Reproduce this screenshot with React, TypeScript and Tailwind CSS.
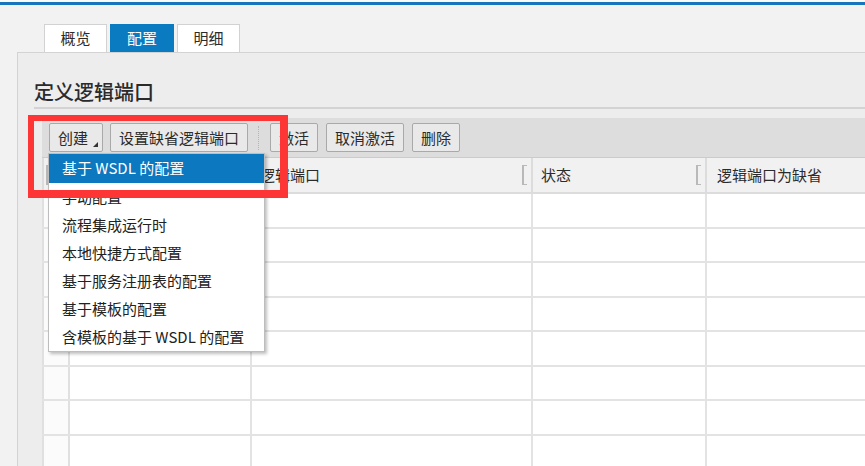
import React from "react";

const font = { fontFamily: '"Noto Sans CJK SC", "Noto Sans", sans-serif' };

function Btn({ children, caret }: { children: React.ReactNode; caret?: boolean }) {
  return (
    <div className="relative h-[29px] px-[8px] flex items-center rounded-[2px] border border-[#a9a9a9] bg-[#e9e9e9] text-[15px] text-[#2b2b2b] leading-none">
      {children}
      {caret && (
        <div className="absolute right-[4px] bottom-[4px] w-0 h-0 border-l-[5px] border-l-transparent border-b-[5px] border-b-[#333]" />
      )}
    </div>
  );
}

function Handle() {
  return <div className="w-[5px] h-[20px] border-l-2 border-t border-b border-[#b9b9b9]" />;
}

export default function App() {
  const rows = Array.from({ length: 8 });
  const menu = [
    "手动配置",
    "流程集成运行时",
    "本地快捷方式配置",
    "基于服务注册表的配置",
    "基于模板的配置",
    "含模板的基于 WSDL 的配置",
  ];
  return (
    <div className="relative w-[865px] h-[466px] overflow-hidden bg-[#f2f2f2] text-[#2b2b2b]" style={font}>
      <div className="h-[2px] bg-[#fafafa]" />
      <div className="h-[3px] bg-[#1775bd]" />
      {/* tabs */}
      <div className="mt-[19px] ml-[44px] flex gap-[3px] h-[28px]">
        <div className="w-[63px] flex items-center justify-center bg-white border border-[#d2d2d2] border-b-0 text-[15px]">概览</div>
        <div className="w-[64px] flex items-center justify-center bg-[#0b7bc1] text-white text-[15px]">配置</div>
        <div className="w-[63px] flex items-center justify-center bg-white border border-[#d2d2d2] border-b-0 text-[15px]">明细</div>
      </div>
      {/* panel */}
      <div className="ml-[17px] h-[414px] bg-[#ededed] border-l border-t border-[#d3d3d3] pl-[16px]">
        <div className="mt-[27px] h-[24px] leading-[24px] text-[20px] font-medium text-[#2a2a2a]">定义逻辑端口</div>
        <div className="mt-[3px] h-[2px] bg-[#d3d3d3]" />
        <div className="ml-[8px] mt-[9px]">
          {/* toolbar */}
          <div className="h-[40px] bg-[#dddddd] border-b border-[#cbcbcb] flex items-center pl-[7px]">
            <Btn caret>
              <span className="pr-[6px]">创建</span>
            </Btn>
            <div className="ml-[7px]">
              <Btn>设置缺省逻辑端口</Btn>
            </div>
            <div className="ml-[10px] mr-[11px] h-[24px] border-l border-dotted border-[#b5b5b5]" />
            <Btn>激活</Btn>
            <div className="ml-[8px]">
              <Btn>取消激活</Btn>
            </div>
            <div className="ml-[8px]">
              <Btn>删除</Btn>
            </div>
          </div>
          {/* grid header */}
          <div className="flex h-[36px] bg-[#f1f1f1] border-b-2 border-[#dcdcdc] text-[15px]">
            <div className="w-[26px] flex items-center pl-[2px] border-l-2 border-[#dcdcdc]">
              <Handle />
            </div>
            <div className="w-[182px]" />
            <div className="w-[281px] flex items-center justify-between pl-[8px] pr-[4px] border-l-2 border-[#dcdcdc]">
              <span>逻辑端口</span>
              <Handle />
            </div>
            <div className="w-[174px] flex items-center justify-between pl-[8px] pr-[4px] border-l-2 border-[#dcdcdc]">
              <span>状态</span>
              <Handle />
            </div>
            <div className="flex-1 flex items-center pl-[10px] border-l-2 border-[#dcdcdc]">
              <span>逻辑端口为缺省</span>
            </div>
          </div>
          {rows.map((_, i) => (
            <div key={i} className="flex h-[34.5px] bg-white border-b-2 border-[#e3e3e3]">
              <div className="w-[26px] bg-[#fbfbfb] border-l-2 border-[#e0e0e0]" />
              <div className="w-[182px] border-l-2 border-[#e0e0e0]" />
              <div className="w-[281px] border-l-2 border-[#e3e3e3]" />
              <div className="w-[174px] border-l-2 border-[#e3e3e3]" />
              <div className="flex-1 border-l-2 border-[#e3e3e3]" />
            </div>
          ))}
        </div>
      </div>

      {/* dropdown menu */}
      <div className="absolute left-[48px] top-[153px] w-[217px] bg-white border border-[#bdbdbd] shadow-[2px_2px_3px_rgba(0,0,0,0.25)] text-[15px]">
        <div className="h-[29px] flex items-center pl-[13px] bg-[#0b78bf] text-white">基于 WSDL 的配置</div>
        {menu.map((m) => (
          <div key={m} className="h-[28px] flex items-center pl-[13px] text-[#222]">
            {m}
          </div>
        ))}
      </div>

      {/* red highlight box */}
      <div className="absolute left-[28px] top-[115px] w-[260px] h-[83px] border-l-[6px] border-t-[6px] border-r-[8px] border-b-[8px] border-[#fd3535]" />
    </div>
  );
}
